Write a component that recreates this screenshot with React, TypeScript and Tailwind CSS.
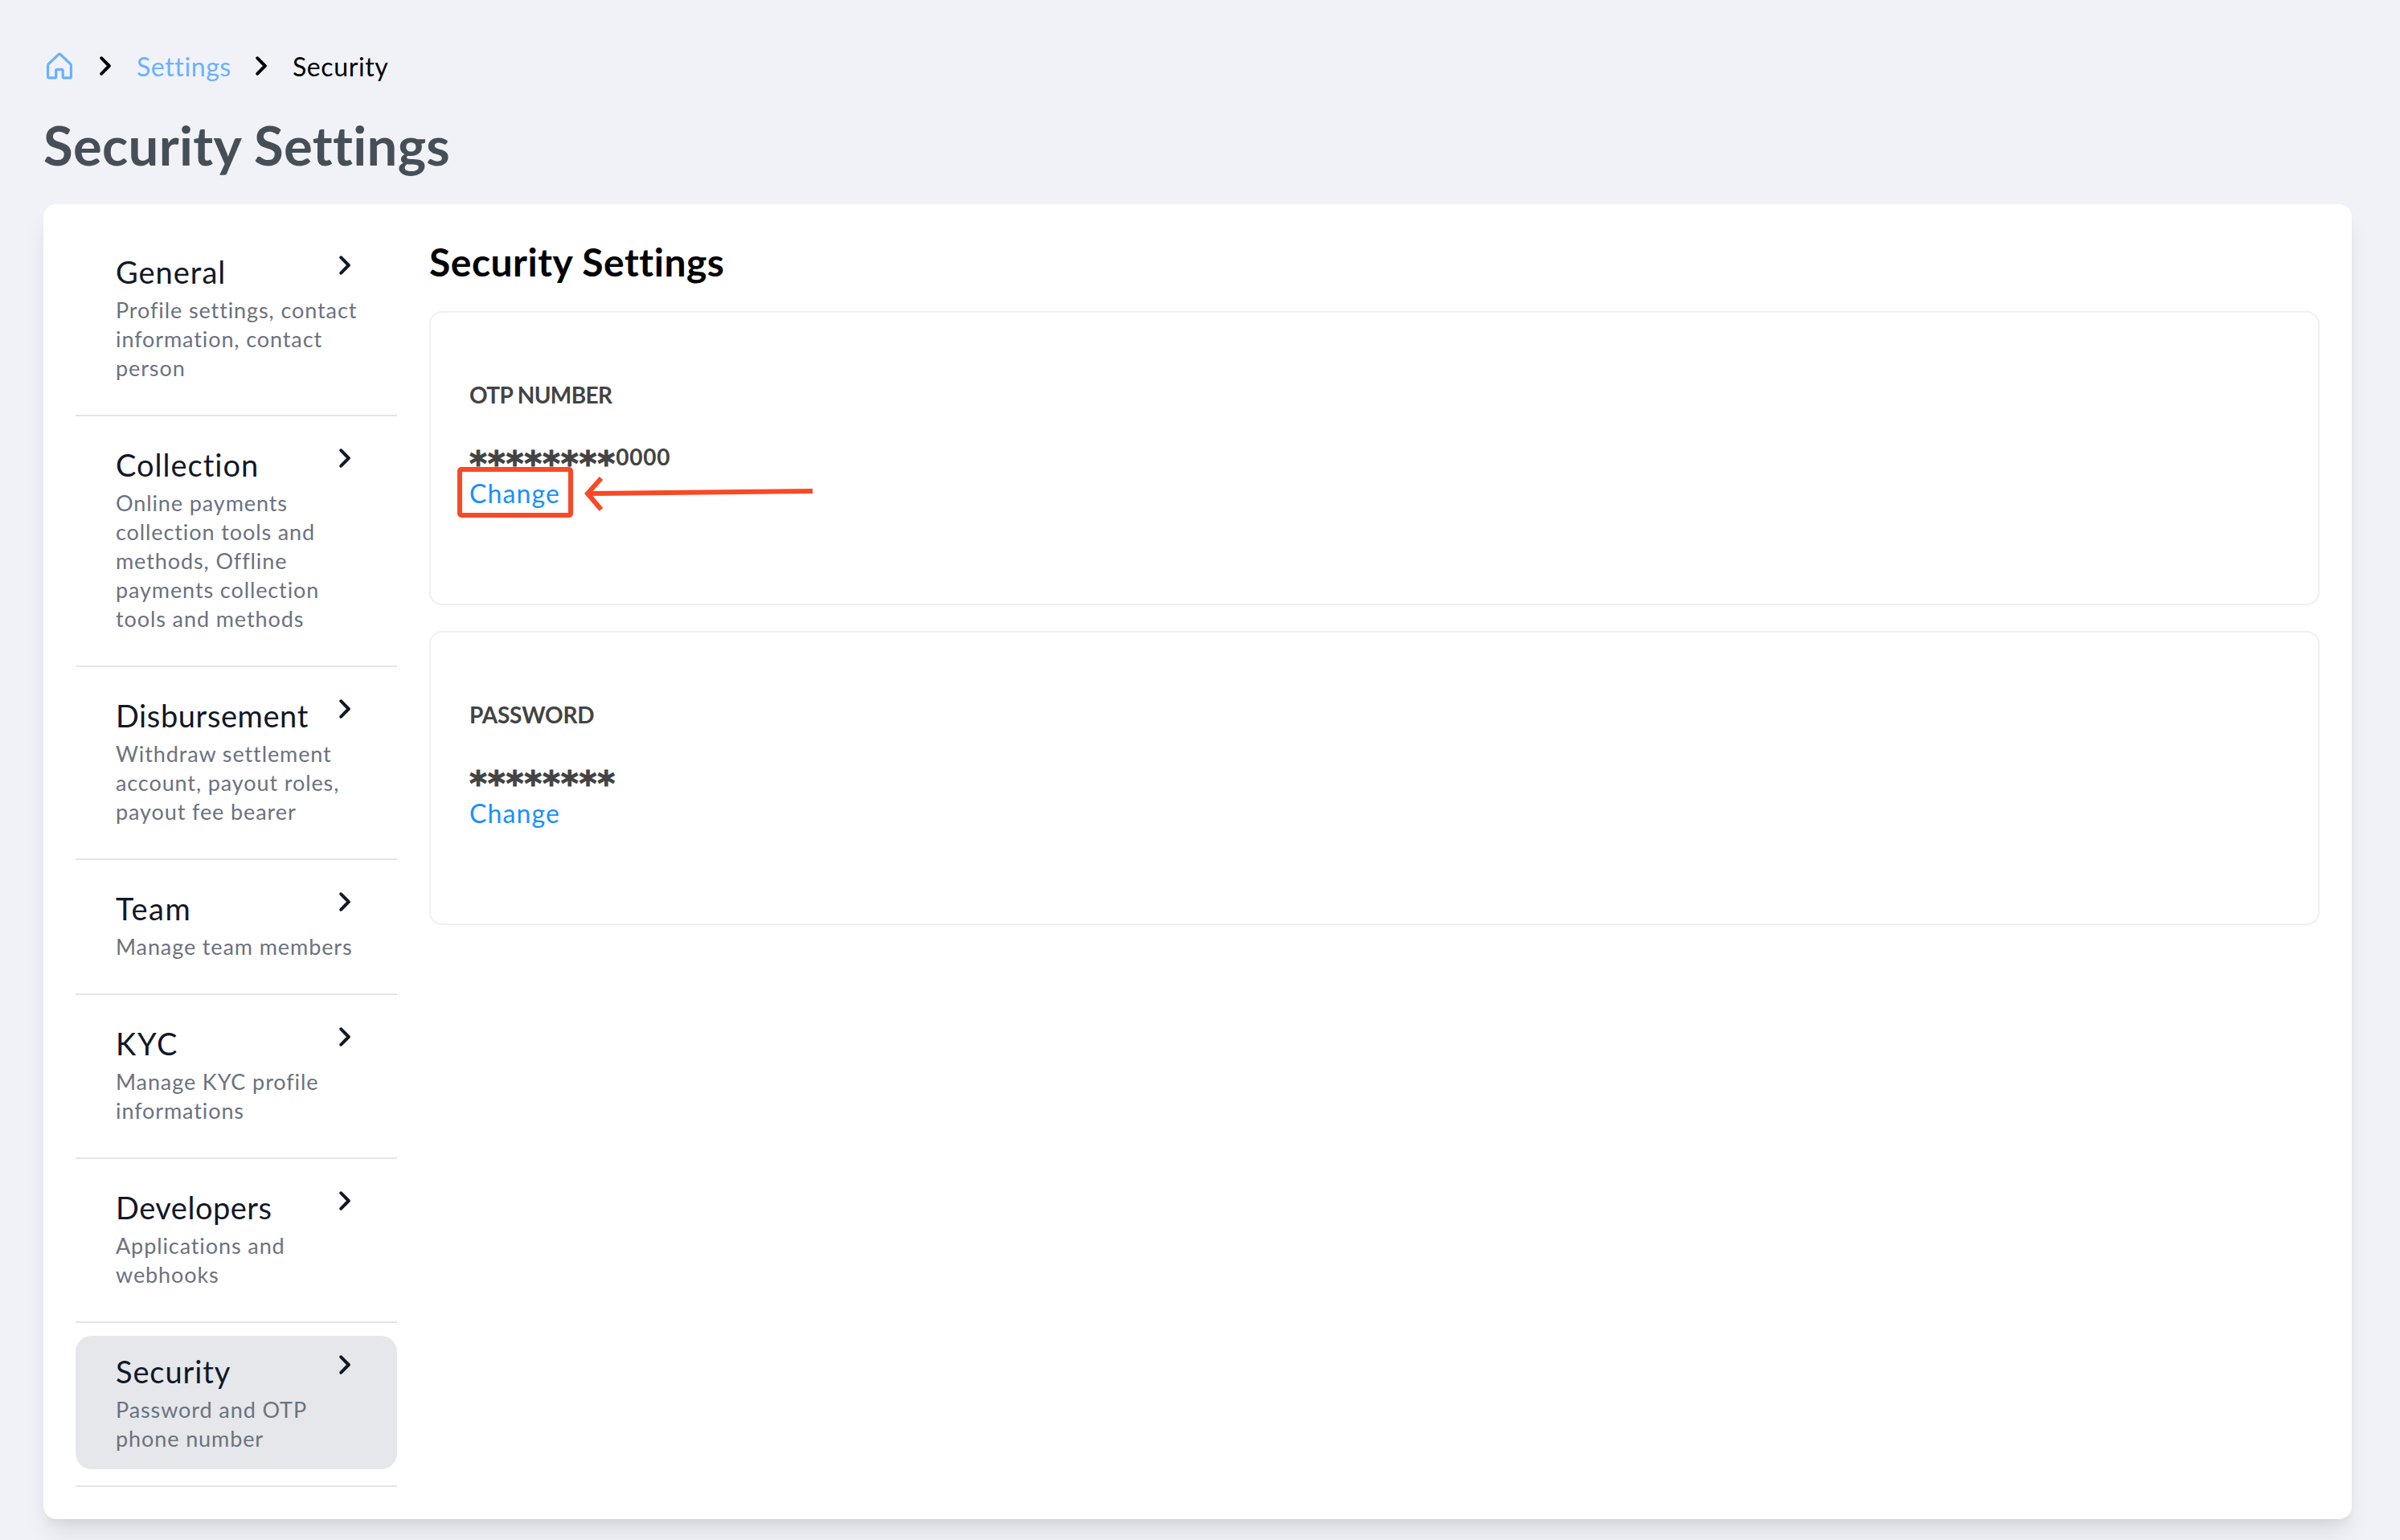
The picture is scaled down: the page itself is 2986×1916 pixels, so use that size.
type MenuItem = {
  title: string;
  description: string;
  tracking: string;
  active?: boolean;
};

const menuItems: MenuItem[] = [
  {
    title: "General",
    description: "Profile settings, contact information, contact person",
    tracking: "tracking-[1px]",
  },
  {
    title: "Collection",
    description:
      "Online payments collection tools and methods, Offline payments collection tools and methods",
    tracking: "tracking-[1px]",
  },
  {
    title: "Disbursement",
    description: "Withdraw settlement account, payout roles, payout fee bearer",
    tracking: "tracking-[0.6px]",
  },
  {
    title: "Team",
    description: "Manage team members",
    tracking: "tracking-[1.6px]",
  },
  {
    title: "KYC",
    description: "Manage KYC profile informations",
    tracking: "tracking-[1.8px]",
  },
  {
    title: "Developers",
    description: "Applications and webhooks",
    tracking: "tracking-[0.5px]",
  },
  {
    title: "Security",
    description: "Password and OTP phone number",
    tracking: "tracking-[0.9px]",
    active: true,
  },
];

function Chevron() {
  return (
    <svg
      className="h-6 w-3.5 shrink-0"
      viewBox="0 0 14 24"
      fill="none"
      stroke="currentColor"
      strokeWidth="4"
      strokeLinecap="round"
      strokeLinejoin="round"
    >
      <path d="M2.3 2.3 11.8 12l-9.5 9.7" />
    </svg>
  );
}

function HomeIcon() {
  return (
    <svg
      className="h-[34px] w-8 shrink-0"
      viewBox="0 0 32 34"
      fill="none"
      stroke="currentColor"
      strokeWidth="3.2"
      strokeLinejoin="round"
    >
      <path d="M14.8 2.8q1.2-1.1 2.4 0l12.5 11.8q.7.8.7 2v13.900q0 1.300-1.300 1.300h-7.600q-1.300 0-1.300-1.300v-7.500q0-1.700-1.700-1.700h-5.100q-1.700 0-1.700 1.700v7.500q0 1.300-1.300 1.300H2.900q-1.300 0-1.300-1.300V16.600q0-1.200.7-2z" />
    </svg>
  );
}

function Breadcrumb() {
  return (
    <nav className="flex h-12 items-center pl-1 text-[32px] leading-[48px]">
      <a href="#" className="text-[#69b1ff]">
        <HomeIcon />
      </a>
      <div className="ml-[34px]">
        <Chevron />
      </div>
      <a
        href="#"
        className="ml-8 w-[117px] pt-0.5 tracking-[0.6px] text-[#69b1ff]"
      >
        Settings
      </a>
      <div className="ml-[31px]">
        <Chevron />
      </div>
      <span className="ml-8 pt-0.5 tracking-[0.6px] text-black">Security</span>
    </nav>
  );
}

function SideMenu() {
  return (
    <aside className="w-[400px] shrink-0">
      {menuItems.map((item) => (
        <div key={item.title} className="border-b-2 border-[#e5e5e5] pt-4 pb-5">
          <a
            href="#"
            className={`flex justify-between rounded-[20px] pt-[17px] pr-[58px] pb-5 pl-[50px] ${
              item.active ? "bg-[#e5e7eb]" : ""
            }`}
          >
            <div className="-mr-[38px] w-[316px]">
              <h3
                className={`h-14 text-[38px] leading-[55px] text-[#111827] ${item.tracking}`}
              >
                {item.title}
              </h3>
              <p className="mt-px text-[27px] leading-9 tracking-[0.9px] text-[#6b7280]">
                {item.description}
              </p>
            </div>
            <div className="mt-[7px] text-[#111827]">
              <Chevron />
            </div>
          </a>
        </div>
      ))}
    </aside>
  );
}

// Box and arrow that point at the first "Change" link
function Highlight() {
  return (
    <svg
      className="pointer-events-none absolute -top-3 -left-[15px] h-[68px] w-[450px]"
      viewBox="0 0 450 68"
      fill="none"
      stroke="#f74a25"
      strokeWidth="6"
    >
      <rect x="3" y="4" width="138" height="57" rx="2" />
      <path d="M442 31 162 34" />
      <path d="m179 15-17 19 17 20" />
    </svg>
  );
}

function SecurityCard({
  label,
  suffix,
  highlighted,
}: {
  label: string;
  suffix?: string;
  highlighted?: boolean;
}) {
  return (
    <div className="h-[366px] rounded-2xl border-2 border-[#f0f0f0] px-12 pt-20">
      <h4
        className={`h-11 text-[28px] leading-[44px] font-bold text-[#434343] ${
          suffix ? "tracking-[-0.6px]" : "tracking-[-0.2px]"
        }`}
      >
        {label}
      </h4>
      <div className="mt-[33px] flex h-11 text-[28px] leading-[44px] font-bold text-[#434343]">
        <span className="h-11 pt-2.5 font-['DejaVu_Sans'] text-[42px] leading-[44px] tracking-[0.8px] [-webkit-text-stroke:1px_#434343]">
          ********
        </span>
        <span className="tracking-[0.8px]">{suffix}</span>
      </div>
      <div className="relative mt-0.5">
        <a
          href="#"
          className="block text-[32px] leading-[44px] tracking-[1.1px] text-[#1890ff]"
        >
          Change
        </a>
        {highlighted && <Highlight />}
      </div>
    </div>
  );
}

export default function App() {
  return (
    <div className="h-[1916px] overflow-hidden bg-[#f1f2f8] px-[54px] pt-[58px] pr-[60px] font-['Lato',sans-serif]">
      <Breadcrumb />
      <h1 className="mt-8 h-[116px] text-[67px] leading-[84px] font-bold tracking-[0.3px] text-[#464e57]">
        Security Settings
      </h1>
      <main className="flex h-[1636px] gap-10 rounded-2xl bg-white px-10 pt-6 shadow-[0_20px_30px_-6px_rgba(0,0,0,0.1),0_8px_12px_-4px_rgba(0,0,0,0.05)]">
        <SideMenu />
        <section className="flex-1 pt-5">
          <h2 className="h-[89px] text-[48px] leading-[56px] font-bold tracking-[0.5px] text-black">
            Security Settings
          </h2>
          <div className="space-y-8">
            <SecurityCard label="OTP NUMBER" suffix="0000" highlighted />
            <SecurityCard label="PASSWORD" />
          </div>
        </section>
      </main>
    </div>
  );
}
